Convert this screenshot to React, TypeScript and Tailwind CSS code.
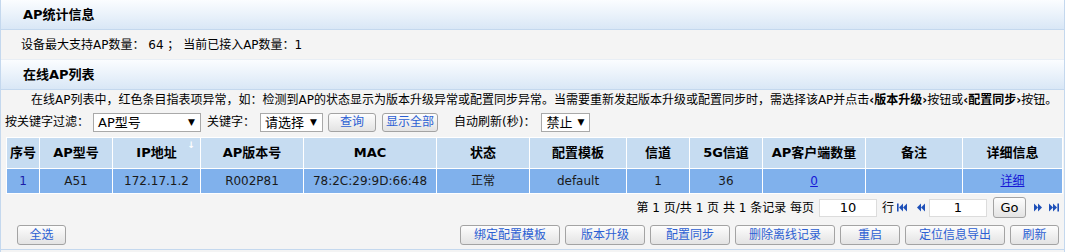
import React from 'react';

const font = "font-['DejaVu_Sans','Noto_Sans_CJK_SC',sans-serif]";

const cols = [
    { title: '序号', value: '1', cls: 'text-[#1b1ba8]' },
    { title: 'AP型号', value: 'A51' },
    { title: 'IP地址', value: '172.17.1.2', sort: true },
    { title: 'AP版本号', value: 'R002P81' },
    { title: 'MAC', value: '78:2C:29:9D:66:48' },
    { title: '状态', value: '正常' },
    { title: '配置模板', value: 'default' },
    { title: '信道', value: '1' },
    { title: '5G信道', value: '36' },
    { title: 'AP客户端数量', value: '0', link: true },
    { title: '备注', value: '' },
    { title: '详细信息', value: '详细', link: true },
];

const SectionHeader: React.FC<{ title: string }> = ({ title }) => (
    <div className="h-[30px] flex items-center pl-[22px] bg-gradient-to-b from-[#fbfdff] to-[#d9e7f6] border-b border-[#c4d8ee]">
        <span className="text-[13px] font-bold text-black">{title}</span>
    </div>
);

const Btn: React.FC<{ label: string; w: string; h?: string }> = ({ label, w, h = 'h-[19px]' }) => (
    <button
        className={`${w} ${h} flex items-center justify-center text-[12px] leading-none text-[#2c5fd3] bg-gradient-to-b from-[#fdfdfd] to-[#e3e3e3] border border-[#a3a3a3] rounded-[3px]`}
    >
        {label}
    </button>
);

const Select: React.FC<{ label: string; w: string }> = ({ label, w }) => (
    <div className={`${w} h-[19px] bg-white border border-[#a9a9a9] flex items-center justify-between pl-[4px] pr-[5px]`}>
        <span className="text-[13px] leading-none text-black">{label}</span>
        <span className="text-[9px] leading-none text-black">▼</span>
    </div>
);

const Tri: React.FC<{ dir: 'first' | 'prev' | 'next' | 'last' }> = ({ dir }) => {
    const flip = dir === 'next' || dir === 'last';
    const bar = dir === 'first' || dir === 'last';
    return (
        <svg width="11" height="9" viewBox="0 0 11 9" className={flip ? 'scale-x-[-1]' : ''}>
            {bar && <rect x="0" y="0.5" width="1.6" height="8" fill="#1d4fb8" />}
            <polygon points={bar ? '2,4.5 6,0.5 6,8.5' : '1,4.5 5,0.5 5,8.5'} fill="#1d4fb8" />
            <polygon points={bar ? '6,4.5 10,0.5 10,8.5' : '5,4.5 9,0.5 9,8.5'} fill="#1d4fb8" />
        </svg>
    );
};

const App: React.FC = () => {
    return (
        <div className={`${font} w-[1065px] h-[252px] bg-[#f4f4f4] border-x border-[#c4d8ee] text-[12px] text-black`}>
            <SectionHeader title="AP统计信息" />
            <div className="h-[30px] flex items-center pl-[20px] border-b border-[#e8eef5]">
                设备最大支持AP数量： 64 ； 当前已接入AP数量：1
            </div>
            <SectionHeader title="在线AP列表" />
            <div className="border-b border-[#c4d8ee]">
                <div className="h-[20px] flex items-center pl-[30px] whitespace-nowrap">
                    在线AP列表中，红色条目指表项异常，如：检测到AP的状态显示为版本升级异常或配置同步异常。当需要重新发起版本升级或配置同步时，需选择该AP并点击
                    <b>‹版本升级›</b>按钮或<b>‹配置同步›</b>按钮。
                </div>
                <div className="h-[24px] flex items-center pl-[4px]">
                    <span>按关键字过滤：</span>
                    <div className="ml-[4px]"><Select label="AP型号" w="w-[108px]" /></div>
                    <span className="ml-[6px]">关键字：</span>
                    <div className="ml-[5px]"><Select label="请选择" w="w-[63px]" /></div>
                    <div className="ml-[5px]"><Btn label="查询" w="w-[48px]" /></div>
                    <div className="ml-[6px]"><Btn label="显示全部" w="w-[56px]" /></div>
                    <span className="ml-[16px]">自动刷新(秒)：</span>
                    <div className="ml-[6px]"><Select label="禁止" w="w-[49px]" /></div>
                </div>
                <div className="mt-[3px] ml-[5px] w-[1057px] bg-white p-px grid grid-cols-[32px_72px_87px_102px_132px_92px_96px_62px_72px_102px_96px_99px] gap-px">
                    {cols.map(c => (
                        <div key={c.title} className="relative h-[30px] bg-[#c6dcf1] flex items-center justify-center text-[13px] font-bold">
                            {c.title}
                            {c.sort && <span className="absolute right-[5px] top-[3px] text-[9px] leading-none text-white">↓</span>}
                        </div>
                    ))}
                    {cols.map(c => (
                        <div key={c.title + 'v'} className={`h-[24px] bg-[#80b1ec] flex items-center justify-center text-[12px] ${c.cls ?? 'text-[#1a1a1a]'}`}>
                            {c.link ? <span className="text-[#1717d6] underline">{c.value}</span> : c.value}
                        </div>
                    ))}
                </div>
                <div className="h-[27px] flex items-center justify-end pr-[5px]">
                    <span>第 1 页/共 1 页 共 1 条记录 每页</span>
                    <div className="ml-[5px] w-[58px] h-[18px] bg-white border border-[#dcdcdc] flex items-center justify-center text-[13px]">10</div>
                    <span className="ml-[5px]">行</span>
                    <div className="ml-[3px]"><Tri dir="first" /></div>
                    <div className="ml-[8px]"><Tri dir="prev" /></div>
                    <div className="ml-[2px] w-[58px] h-[18px] bg-white border border-[#dcdcdc] flex items-center justify-center text-[13px]">1</div>
                    <div className="ml-[6px] w-[33px] h-[21px] flex items-center justify-center text-[13px] bg-gradient-to-b from-[#fdfdfd] to-[#e3e3e3] border border-[#a3a3a3] rounded-[3px]">Go</div>
                    <div className="ml-[6px]"><Tri dir="next" /></div>
                    <div className="ml-[5px]"><Tri dir="last" /></div>
                </div>
                <div className="h-[28px] flex items-center pl-[16px] pr-[5px]">
                    <Btn label="全选" w="w-[49px]" h="h-[20px]" />
                    <div className="ml-auto flex items-center gap-[5px]">
                        <Btn label="绑定配置模板" w="w-[100px]" h="h-[20px]" />
                        <Btn label="版本升级" w="w-[80px]" h="h-[20px]" />
                        <Btn label="配置同步" w="w-[80px]" h="h-[20px]" />
                        <Btn label="删除离线记录" w="w-[100px]" h="h-[20px]" />
                        <Btn label="重启" w="w-[60px]" h="h-[20px]" />
                        <Btn label="定位信息导出" w="w-[100px]" h="h-[20px]" />
                        <Btn label="刷新" w="w-[49px]" h="h-[20px]" />
                    </div>
                </div>
            </div>
        </div>
    );
};

export default App;
